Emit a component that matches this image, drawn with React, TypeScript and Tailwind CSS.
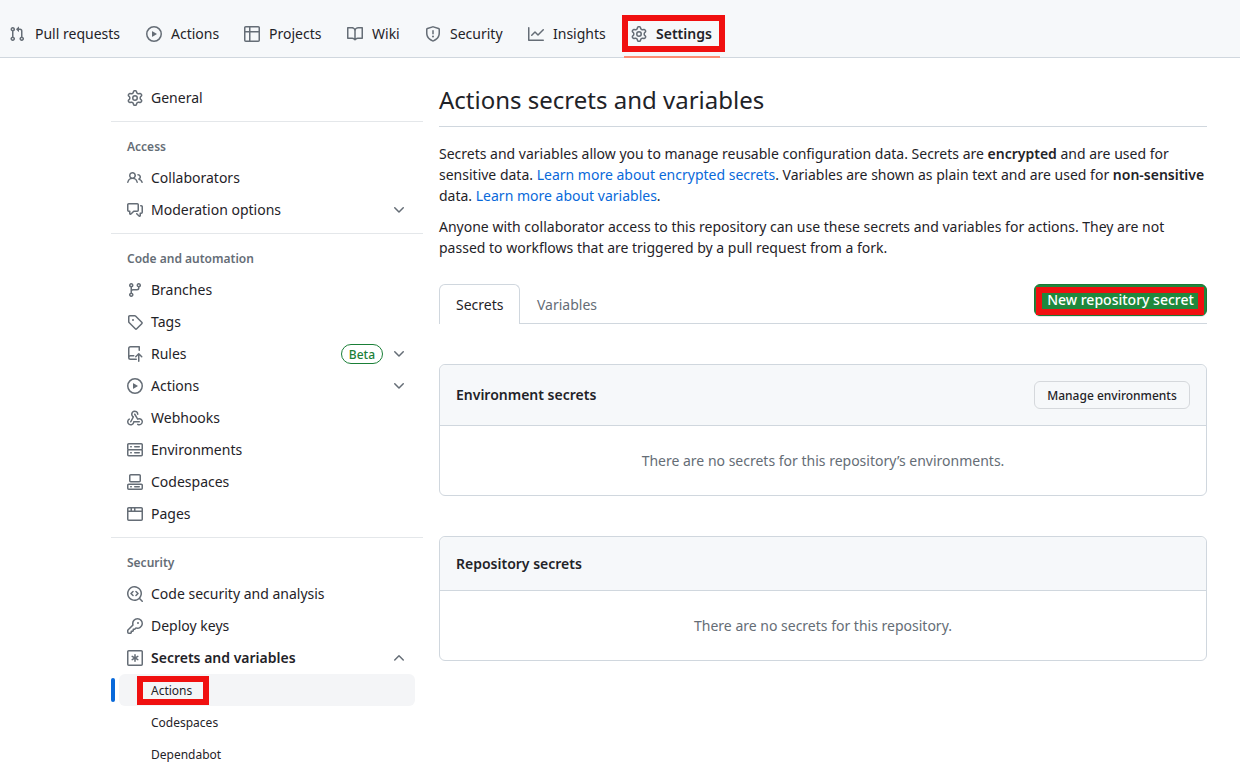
import type { ReactNode } from 'react';

const ICONS = {
  pull: 'M1.5 3.25a2.25 2.25 0 1 1 3 2.122v5.256a2.251 2.251 0 1 1-1.5 0V5.372A2.25 2.25 0 0 1 1.5 3.25Zm5.677-.177L9.573.677A.25.25 0 0 1 10 .854V2.5h1A2.5 2.5 0 0 1 13.5 5v5.628a2.251 2.251 0 1 1-1.5 0V5a1 1 0 0 0-1-1h-1v1.646a.25.25 0 0 1-.427.177L7.177 3.427a.25.25 0 0 1 0-.354ZM3.75 2.5a.75.75 0 1 0 0 1.5.75.75 0 0 0 0-1.5Zm0 9.5a.75.75 0 1 0 0 1.5.75.75 0 0 0 0-1.5Zm8.25.75a.75.75 0 1 0 1.5 0 .75.75 0 0 0-1.5 0Z',
  play: 'M8 0a8 8 0 1 1 0 16A8 8 0 0 1 8 0ZM1.5 8a6.5 6.5 0 1 0 13 0 6.5 6.5 0 0 0-13 0Zm4.879-2.773 4.264 2.559a.25.25 0 0 1 0 .428l-4.264 2.559A.25.25 0 0 1 6 10.559V5.442a.25.25 0 0 1 .379-.215Z',
  table: 'M0 1.75C0 .784.784 0 1.75 0h12.5C15.216 0 16 .784 16 1.75v12.5A1.75 1.75 0 0 1 14.25 16H1.75A1.75 1.75 0 0 1 0 14.25ZM6.5 6.5v8h7.75a.25.25 0 0 0 .25-.25V6.5Zm8-1.5V1.75a.25.25 0 0 0-.25-.25H6.5V5Zm-13 1.5v7.75c0 .138.112.25.25.25H5v-8ZM5 5V1.5H1.75a.25.25 0 0 0-.25.25V5Z',
  book: 'M0 1.75A.75.75 0 0 1 .75 1h4.253c1.227 0 2.317.59 3 1.501A3.743 3.743 0 0 1 11.006 1h4.245a.75.75 0 0 1 .75.75v10.5a.75.75 0 0 1-.75.75h-4.507a2.25 2.25 0 0 0-1.591.659l-.622.621a.75.75 0 0 1-1.06 0l-.622-.621A2.25 2.25 0 0 0 5.258 13H.75a.75.75 0 0 1-.75-.75Zm7.251 10.324.004-5.073-.002-2.253A2.25 2.25 0 0 0 5.003 2.5H1.5v9h3.757a3.75 3.75 0 0 1 1.994.574ZM8.755 4.75l-.004 7.322a3.752 3.752 0 0 1 1.992-.572H14.5v-9h-3.495a2.25 2.25 0 0 0-2.25 2.25Z',
  shield: 'M7.467.133a1.748 1.748 0 0 1 1.066 0l5.25 1.68A1.75 1.75 0 0 1 15 3.48V7c0 1.566-.32 3.182-1.303 4.682-.983 1.498-2.585 2.813-5.032 3.855a1.697 1.697 0 0 1-1.33 0c-2.447-1.042-4.049-2.357-5.032-3.855C1.32 10.182 1 8.566 1 7V3.48a1.75 1.75 0 0 1 1.217-1.667Zm.61 1.429a.25.25 0 0 0-.153 0l-5.25 1.68a.25.25 0 0 0-.174.238V7c0 1.358.275 2.666 1.057 3.86.784 1.194 2.121 2.34 4.366 3.297a.196.196 0 0 0 .154 0c2.245-.956 3.582-2.104 4.366-3.298C13.225 9.666 13.5 8.36 13.5 7V3.48a.251.251 0 0 0-.174-.237l-5.25-1.68ZM8.75 4.75v3a.75.75 0 0 1-1.5 0v-3a.75.75 0 0 1 1.5 0ZM9 10.5a1 1 0 1 1-2 0 1 1 0 0 1 2 0Z',
  graph: 'M1.5 1.75V13.5h13.75a.75.75 0 0 1 0 1.5H.75a.75.75 0 0 1-.75-.75V1.75a.75.75 0 0 1 1.5 0Zm14.28 2.53-5.25 5.25a.75.75 0 0 1-1.06 0L7 7.06 4.28 9.78a.751.751 0 0 1-1.042-.018.751.751 0 0 1-.018-1.042l3.25-3.25a.75.75 0 0 1 1.06 0L10 7.94l4.72-4.72a.751.751 0 0 1 1.042.018.751.751 0 0 1 .018 1.042Z',
  gear: 'M8 0a8.2 8.2 0 0 1 .701.031C9.444.095 9.99.645 10.16 1.29l.288 1.107c.018.066.079.158.212.224.231.114.454.243.668.386.123.082.233.09.299.071l1.103-.303c.644-.176 1.392.021 1.82.63.27.385.506.792.704 1.218.315.675.111 1.422-.364 1.891l-.814.806c-.049.048-.098.147-.088.294.016.257.016.515 0 .772-.01.147.038.246.088.294l.814.806c.475.469.679 1.216.364 1.891a7.977 7.977 0 0 1-.704 1.217c-.428.61-1.176.807-1.82.63l-1.102-.302c-.067-.019-.177-.011-.3.071a5.909 5.909 0 0 1-.668.386c-.133.066-.194.158-.211.224l-.29 1.106c-.168.646-.715 1.196-1.458 1.26a8.006 8.006 0 0 1-1.402 0c-.743-.064-1.289-.614-1.458-1.26l-.289-1.106c-.018-.066-.079-.158-.212-.224a5.738 5.738 0 0 1-.668-.386c-.123-.082-.233-.09-.299-.071l-1.103.303c-.644.176-1.392-.021-1.82-.63a8.12 8.12 0 0 1-.704-1.218c-.315-.675-.111-1.422.363-1.891l.815-.806c.05-.048.098-.147.088-.294a6.214 6.214 0 0 1 0-.772c.01-.147-.038-.246-.088-.294l-.815-.806C.635 6.045.431 5.298.746 4.623a7.92 7.92 0 0 1 .704-1.217c.428-.61 1.176-.807 1.82-.63l1.102.302c.067.019.177.011.3-.071.214-.143.437-.272.668-.386.133-.066.194-.158.211-.224l.29-1.106C6.009.645 6.556.095 7.299.03 7.53.01 7.764 0 8 0Zm-.571 1.525c-.036.003-.108.036-.137.146l-.289 1.105c-.147.561-.549.967-.998 1.189-.173.086-.34.183-.5.29-.417.278-.97.423-1.529.27l-1.103-.303c-.109-.03-.175.016-.195.045-.22.312-.412.644-.573.99-.014.031-.021.11.059.19l.815.806c.411.406.562.957.53 1.456a4.709 4.709 0 0 0 0 .582c.032.499-.119 1.05-.53 1.456l-.815.806c-.081.08-.073.159-.059.19.162.346.353.677.573.989.02.03.085.076.195.046l1.102-.303c.56-.153 1.113-.008 1.53.27.161.107.328.204.501.29.447.222.85.629.997 1.189l.289 1.105c.029.109.101.143.137.146a6.6 6.6 0 0 0 1.142 0c.036-.003.108-.036.137-.146l.289-1.105c.147-.561.549-.967.998-1.189.173-.086.34-.183.5-.29.417-.278.97-.423 1.529-.27l1.103.303c.109.029.175-.016.195-.045.22-.313.411-.644.573-.99.014-.031.021-.11-.059-.19l-.815-.806c-.411-.406-.562-.957-.53-1.456a4.709 4.709 0 0 0 0-.582c-.032-.499.119-1.05.53-1.456l.815-.806c.081-.08.073-.159.059-.19a6.464 6.464 0 0 0-.573-.989c-.02-.03-.085-.076-.195-.046l-1.102.303c-.56.153-1.113.008-1.53-.27a4.44 4.44 0 0 0-.501-.29c-.447-.222-.85-.629-.997-1.189l-.289-1.105c-.029-.11-.101-.143-.137-.146a6.6 6.6 0 0 0-1.142 0ZM11 8a3 3 0 1 1-6 0 3 3 0 0 1 6 0ZM9.5 8a1.5 1.5 0 1 0-3.001.001A1.5 1.5 0 0 0 9.5 8Z',
  people: 'M2 5.5a3.5 3.5 0 1 1 5.898 2.549 5.508 5.508 0 0 1 3.034 4.084.75.75 0 1 1-1.482.235 4 4 0 0 0-7.9 0 .75.75 0 0 1-1.482-.236A5.507 5.507 0 0 1 3.102 8.05 3.493 3.493 0 0 1 2 5.5ZM11 4a3.001 3.001 0 0 1 2.22 5.018 5.01 5.01 0 0 1 2.56 3.012.749.749 0 0 1-.885.954.752.752 0 0 1-.549-.514 3.507 3.507 0 0 0-2.522-2.372.75.75 0 0 1-.574-.73v-.352a.75.75 0 0 1 .416-.672A1.5 1.5 0 0 0 11 5.5.75.75 0 0 1 11 4Zm-5.5-.5a2 2 0 1 0-.001 3.999A2 2 0 0 0 5.5 3.5Z',
  discussion: 'M1.75 1h8.5c.966 0 1.75.784 1.75 1.75v5.5A1.75 1.75 0 0 1 10.25 10H7.061l-2.574 2.573A1.458 1.458 0 0 1 2 11.543V10h-.25A1.75 1.75 0 0 1 0 8.25v-5.5C0 1.784.784 1 1.75 1ZM1.5 2.75v5.5c0 .138.112.25.25.25h1a.75.75 0 0 1 .75.75v2.19l2.72-2.72a.749.749 0 0 1 .53-.22h3.5a.25.25 0 0 0 .25-.25v-5.5a.25.25 0 0 0-.25-.25h-8.5a.25.25 0 0 0-.25.25Zm13 2a.25.25 0 0 0-.25-.25h-.5a.75.75 0 0 1 0-1.5h.5c.966 0 1.75.784 1.75 1.75v5.5A1.75 1.75 0 0 1 14.25 12H14v1.543a1.458 1.458 0 0 1-2.487 1.03L9.22 12.28a.749.749 0 0 1 .326-1.275.749.749 0 0 1 .734.215l2.22 2.22v-2.19a.75.75 0 0 1 .75-.75h1a.25.25 0 0 0 .25-.25Z',
  branch: 'M9.5 3.25a2.25 2.25 0 1 1 3 2.122V6A2.5 2.5 0 0 1 10 8.5H6a1 1 0 0 0-1 1v1.128a2.251 2.251 0 1 1-1.5 0V5.372a2.25 2.25 0 1 1 1.5 0v1.836A2.493 2.493 0 0 1 6 7h4a1 1 0 0 0 1-1v-.628A2.25 2.25 0 0 1 9.5 3.25Zm-6 0a.75.75 0 1 0 1.5 0 .75.75 0 0 0-1.5 0Zm8.25-.75a.75.75 0 1 0 0 1.5.75.75 0 0 0 0-1.5ZM4.25 12a.75.75 0 1 0 0 1.5.75.75 0 0 0 0-1.5Z',
  tag: 'M1 7.775V2.75C1 1.784 1.784 1 2.75 1h5.025c.464 0 .91.184 1.238.513l6.25 6.25a1.75 1.75 0 0 1 0 2.474l-5.026 5.026a1.75 1.75 0 0 1-2.474 0l-6.25-6.25A1.752 1.752 0 0 1 1 7.775Zm1.5 0c0 .066.026.13.073.177l6.25 6.25a.25.25 0 0 0 .354 0l5.025-5.025a.25.25 0 0 0 0-.354l-6.25-6.25a.25.25 0 0 0-.177-.073H2.75a.25.25 0 0 0-.25.25ZM6 5a1 1 0 1 1 0 2 1 1 0 0 1 0-2Z',
  push: 'M1 2.5A2.5 2.5 0 0 1 3.5 0h8.75a.75.75 0 0 1 .75.75v3.5a.75.75 0 0 1-1.5 0V1.5h-8a1 1 0 0 0-1 1v6.708A2.493 2.493 0 0 1 3.5 9h3.25a.75.75 0 0 1 0 1.5H3.5a1 1 0 0 0 0 2h5.75a.75.75 0 0 1 0 1.5H3.5A2.5 2.5 0 0 1 1 11.5ZM12.28 7.22l3 3a.75.75 0 0 1-1.06 1.06L12.5 9.56v5.69a.75.75 0 0 1-1.5 0V9.56l-1.72 1.72a.75.75 0 0 1-1.06-1.06l3-3a.75.75 0 0 1 1.06 0Z',
  webhook: 'M5.5 4.25a2.25 2.25 0 0 1 4.5 0 .75.75 0 0 0 1.5 0 3.75 3.75 0 1 0-6.14 2.889l-2.272 4.258a.75.75 0 0 0 1.324.706L7 7.25a.75.75 0 0 0-.309-1.015A2.25 2.25 0 0 1 5.5 4.25ZM7.364 3.607a.75.75 0 0 1 1.03.257l2.608 4.349a3.75 3.75 0 1 1-.628 6.785.75.75 0 0 1 .752-1.299 2.25 2.25 0 1 0-.033-3.88.75.75 0 0 1-1.03-.256L7.107 4.636a.75.75 0 0 1 .257-1.03ZM2.9 8.776A.75.75 0 0 1 2.625 9.8 2.25 2.25 0 1 0 6 11.75a.75.75 0 0 1 .75-.751h5.5a.75.75 0 0 1 0 1.5H7.425a3.751 3.751 0 1 1-5.55-3.998.75.75 0 0 1 1.024.274Z',
  server: 'M1.75 1h12.5c.966 0 1.75.784 1.75 1.75v4c0 .372-.116.717-.314 1 .198.283.314.628.314 1v4a1.75 1.75 0 0 1-1.75 1.75H1.75A1.75 1.75 0 0 1 0 12.75v-4c0-.358.109-.707.314-1a1.739 1.739 0 0 1-.314-1v-4C0 1.784.784 1 1.75 1ZM1.5 2.75v4c0 .138.112.25.25.25h12.5a.25.25 0 0 0 .25-.25v-4a.25.25 0 0 0-.25-.25H1.75a.25.25 0 0 0-.25.25Zm.25 5.75a.25.25 0 0 0-.25.25v4c0 .138.112.25.25.25h12.5a.25.25 0 0 0 .25-.25v-4a.25.25 0 0 0-.25-.25ZM7 4.75A.75.75 0 0 1 7.75 4h4.5a.75.75 0 0 1 0 1.5h-4.5A.75.75 0 0 1 7 4.75ZM7.75 10h4.5a.75.75 0 0 1 0 1.5h-4.5a.75.75 0 0 1 0-1.5ZM3 4.75A.75.75 0 0 1 3.75 4h.5a.75.75 0 0 1 0 1.5h-.5A.75.75 0 0 1 3 4.75ZM3.75 10h.5a.75.75 0 0 1 0 1.5h-.5a.75.75 0 0 1 0-1.5Z',
  codespaces: 'M0 11.25c0-.966.784-1.75 1.75-1.75h12.5c.966 0 1.75.784 1.75 1.75v3A1.75 1.75 0 0 1 14.25 16H1.75A1.75 1.75 0 0 1 0 14.25Zm2-9.5C2 .784 2.784 0 3.75 0h8.5C13.216 0 14 .784 14 1.75v5a1.75 1.75 0 0 1-1.75 1.75h-8.5A1.75 1.75 0 0 1 2 6.75Zm1.75-.25a.25.25 0 0 0-.25.25v5c0 .138.112.25.25.25h8.5a.25.25 0 0 0 .25-.25v-5a.25.25 0 0 0-.25-.25Zm-2 9.5a.25.25 0 0 0-.25.25v3c0 .138.112.25.25.25h12.5a.25.25 0 0 0 .25-.25v-3a.25.25 0 0 0-.25-.25ZM7 12.75a.75.75 0 0 1 .75-.75h4.5a.75.75 0 0 1 0 1.5h-4.5a.75.75 0 0 1-.75-.75Zm-4 0a.75.75 0 0 1 .75-.75h.5a.75.75 0 0 1 0 1.5h-.5a.75.75 0 0 1-.75-.75Z',
  browser: 'M0 2.75C0 1.784.784 1 1.75 1h12.5c.966 0 1.75.784 1.75 1.75v10.5A1.75 1.75 0 0 1 14.25 15H1.75A1.75 1.75 0 0 1 0 13.25ZM14.5 6h-13v7.25c0 .138.112.25.25.25h12.5a.25.25 0 0 0 .25-.25Zm-6-3.5v2h6V2.75a.25.25 0 0 0-.25-.25ZM5 2.5v2h2v-2Zm-3.25 0a.25.25 0 0 0-.25.25V4.5h2v-2Z',
  codescan: 'M8.47 4.97a.75.75 0 0 0 0 1.06L9.94 7.5 8.47 8.97a.75.75 0 1 0 1.06 1.06l2-2a.75.75 0 0 0 0-1.06l-2-2a.75.75 0 0 0-1.06 0ZM6.53 6.03a.75.75 0 0 0-1.06-1.06l-2 2a.75.75 0 0 0 0 1.06l2 2a.75.75 0 1 0 1.06-1.06L5.06 7.5l1.47-1.47ZM12.246 13.307a7.501 7.501 0 1 1 1.06-1.06l2.474 2.473a.749.749 0 0 1-.326 1.275.749.749 0 0 1-.734-.215ZM1.5 7.5a6.002 6.002 0 0 0 3.608 5.504 6.002 6.002 0 0 0 6.486-1.117.748.748 0 0 1 .292-.293A6 6 0 1 0 1.5 7.5Z',
  key: 'M10.5 0a5.499 5.499 0 1 1-1.288 10.848l-.932.932a.749.749 0 0 1-.53.22H7v.75a.749.749 0 0 1-.22.53l-.5.5a.749.749 0 0 1-.53.22H5v.75a.749.749 0 0 1-.22.53l-.5.5a.749.749 0 0 1-.53.22h-2A1.75 1.75 0 0 1 0 14.25v-2c0-.199.079-.389.22-.53l4.932-4.932A5.5 5.5 0 0 1 10.5 0Zm-4 5.5c-.001.431.069.86.205 1.269a.75.75 0 0 1-.181.768L1.5 12.56v1.69c0 .138.112.25.25.25h1.69l.06-.06v-1.19a.75.75 0 0 1 .75-.75h1.19l.06-.06v-1.19a.75.75 0 0 1 .75-.75h1.19l1.023-1.025a.75.75 0 0 1 .768-.18A4 4 0 1 0 6.5 5.5ZM11 6a1 1 0 1 1 0-2 1 1 0 0 1 0 2Z',
  asterisk: 'M0 1.75C0 .784.784 0 1.75 0h12.5C15.216 0 16 .784 16 1.75v12.5A1.75 1.75 0 0 1 14.25 16H1.75A1.75 1.75 0 0 1 0 14.25ZM1.75 1.5a.25.25 0 0 0-.25.25v12.5c0 .138.112.25.25.25h12.5a.25.25 0 0 0 .25-.25V1.75a.25.25 0 0 0-.25-.25ZM8 4a.75.75 0 0 1 .75.75V6.7l1.69-.975a.75.75 0 0 1 .75 1.3L9.5 8l1.69.976a.75.75 0 0 1-.75 1.298L8.75 9.3v1.951a.75.75 0 0 1-1.5 0V9.299l-1.69.976a.75.75 0 0 1-.75-1.3L6.5 8l-1.69-.975a.75.75 0 0 1 .75-1.3l1.69.976V4.75A.75.75 0 0 1 8 4Z',
  down: 'M12.78 5.22a.749.749 0 0 1 0 1.06l-4.25 4.25a.749.749 0 0 1-1.06 0L3.22 6.28a.749.749 0 1 1 1.06-1.06L8 8.939l3.72-3.719a.749.749 0 0 1 1.06 0Z',
  up: 'M3.22 10.53a.749.749 0 0 1 0-1.06l4.25-4.25a.749.749 0 0 1 1.06 0l4.25 4.25a.749.749 0 1 1-1.06 1.06L8 6.811 4.28 10.53a.749.749 0 0 1-1.06 0Z',
};

type IconName = keyof typeof ICONS;

function Icon({ name }: { name: IconName }) {
  return (
    <svg viewBox="0 0 16 16" className="h-4 w-4 shrink-0 fill-[#656d76]" aria-hidden="true">
      <path d={ICONS[name]} />
    </svg>
  );
}

function Highlight({ className }: { className: string }) {
  return <span className={`pointer-events-none absolute border-6 border-[#f01010] ${className}`} />;
}

const TABS: { icon: IconName; label: string; width: string; gap: string }[] = [
  { icon: 'pull', label: 'Pull requests', width: 'w-[137px]', gap: 'gap-[10px]' },
  { icon: 'play', label: 'Actions', width: 'w-[98px]', gap: 'gap-[9px]' },
  { icon: 'table', label: 'Projects', width: 'w-[103px]', gap: 'gap-[9px]' },
  { icon: 'book', label: 'Wiki', width: 'w-[78px]', gap: 'gap-[9px]' },
  { icon: 'shield', label: 'Security', width: 'w-[103px]', gap: 'gap-[9px]' },
  { icon: 'graph', label: 'Insights', width: 'w-[103px]', gap: 'gap-[9px]' },
];

function TopNav() {
  return (
    <header className="flex h-[58px] shrink-0 border-b border-[#d0d7de] bg-[#f6f8fa] pt-5 pl-[9px]">
      {TABS.map((t) => (
        <a key={t.label} className={`flex h-7 shrink-0 items-center ${t.gap} ${t.width}`}>
          <Icon name={t.icon} />
          <span className="whitespace-nowrap">{t.label}</span>
        </a>
      ))}
      <a className="relative flex h-[38px] w-24 items-start">
        <span className="flex h-7 items-center gap-[9px]">
          <Icon name="gear" />
          <span className="font-semibold">Settings</span>
        </span>
        <span className="absolute -left-[7px] bottom-0 h-[2px] w-24 bg-[#fd8c73]" />
        <Highlight className="-top-[5px] -left-[9px] h-[37px] w-[103px]" />
      </a>
    </header>
  );
}

function NavRow({ icon, label, bold, badge, chevron }: { icon: IconName; label: string; bold?: boolean; badge?: string; chevron?: IconName }) {
  return (
    <a className="flex h-8 items-center gap-2 pr-2 pl-4">
      <Icon name={icon} />
      <span className={bold ? 'grow font-semibold' : 'grow'}>{label}</span>
      {badge && (
        <span className="flex h-5 items-center rounded-full border border-[#1a7f37] px-[7px] pt-0.5 text-xs font-medium text-[#1a7f37]">{badge}</span>
      )}
      {chevron && <Icon name={chevron} />}
    </a>
  );
}

function Group({ title, children }: { title: string; children: ReactNode }) {
  return (
    <section className="mt-[7px] w-[312px] border-t border-[#e4e7ea] pt-2">
      <h3 className="flex h-8 items-center pt-0.5 pl-4 text-xs font-semibold text-[#656d76]">{title}</h3>
      <div className="w-[304px]">{children}</div>
    </section>
  );
}

function Sidebar() {
  return (
    <nav className="w-[312px] shrink-0 pt-6">
      <NavRow icon="gear" label="General" />
      <Group title="Access">
        <NavRow icon="people" label="Collaborators" />
        <NavRow icon="discussion" label="Moderation options" chevron="down" />
      </Group>
      <Group title="Code and automation">
        <NavRow icon="branch" label="Branches" />
        <NavRow icon="tag" label="Tags" />
        <NavRow icon="push" label="Rules" badge="Beta" chevron="down" />
        <NavRow icon="play" label="Actions" chevron="down" />
        <NavRow icon="webhook" label="Webhooks" />
        <NavRow icon="server" label="Environments" />
        <NavRow icon="codespaces" label="Codespaces" />
        <NavRow icon="browser" label="Pages" />
      </Group>
      <Group title="Security">
        <NavRow icon="codescan" label="Code security and analysis" />
        <NavRow icon="key" label="Deploy keys" />
        <NavRow icon="asterisk" label="Secrets and variables" bold chevron="up" />
        <div className="flex items-center gap-1 text-xs">
          <span className="h-6 w-1 rounded-md bg-[#0969da]" />
          <a className="relative flex h-8 grow items-center rounded-md bg-[#f4f5f7] pt-0.5 pl-8">
            Actions
            <Highlight className="top-[2px] left-[18px] h-[29px] w-[72px]" />
          </a>
        </div>
        <a className="flex h-8 items-center pt-0.5 pl-10 text-xs">Codespaces</a>
        <a className="flex h-8 items-center pt-0.5 pl-10 text-xs">Dependabot</a>
      </Group>
    </nav>
  );
}

function Main() {
  return (
    <main className="w-[768px] shrink-0 pt-6">
      <h1 className="h-[45px] border-b border-[#d0d7de] text-2xl leading-9">Actions secrets and variables</h1>
      <p className="mt-4 leading-[21px]">
        Secrets and variables allow you to manage reusable configuration data. Secrets are <b className="font-semibold">encrypted</b> and are used for
        sensitive data. <a className="text-[#0969da]">Learn more about encrypted secrets</a>. Variables are shown as plain text and are used for{' '}
        <b className="font-semibold">non-sensitive</b> data. <a className="text-[#0969da]">Learn more about variables</a>.
      </p>
      <p className="mt-[10px] leading-[21px]">
        Anyone with collaborator access to this repository can use these secrets and variables for actions. They are not passed to workflows that are
        triggered by a pull request from a fork.
      </p>
      <div className="mt-[26px] flex h-10 items-start border-b border-[#d0d7de]">
        <a className="flex h-10 w-[81px] items-center rounded-t-md border border-b-0 border-[#d0d7de] bg-white pl-4">Secrets</a>
        <a className="flex h-10 items-center pt-px pl-[17px] text-[#656d76]">Variables</a>
        <button className="relative ml-auto flex h-8 w-[173px] items-center justify-center rounded-md border border-[#1c7735] bg-[#1f883d] font-medium text-white shadow-[0_1px_0_rgba(31,35,40,0.1)]">
          <Highlight className="top-[2px] left-px h-7 w-[168px]" />
          <span className="relative">New repository secret</span>
        </button>
      </div>
      <section className="mt-10 rounded-md border border-[#d0d7de]">
        <div className="flex h-[61px] items-center justify-between rounded-t-md border-b border-[#d0d7de] bg-[#f6f8fa] px-4">
          <h3 className="font-semibold">Environment secrets</h3>
          <button className="h-7 w-[156px] rounded-md border border-[#d5d8dc] bg-[#f6f8fa] pt-0.5 text-xs font-medium whitespace-nowrap">Manage environments</button>
        </div>
        <p className="flex h-[69px] items-center justify-center text-[#656d76]">There are no secrets for this repository’s environments.</p>
      </section>
      <section className="mt-10 rounded-md border border-[#d0d7de]">
        <div className="flex h-[54px] items-center rounded-t-md border-b border-[#d0d7de] bg-[#f6f8fa] px-4">
          <h3 className="font-semibold">Repository secrets</h3>
        </div>
        <p className="flex h-[69px] items-center justify-center text-[#656d76]">There are no secrets for this repository.</p>
      </section>
    </main>
  );
}

export default function App() {
  return (
    <div className="flex h-[772px] w-[1240px] flex-col overflow-hidden bg-white font-['Noto_Sans',sans-serif] text-sm text-[#1f2328]">
      <TopNav />
      <div className="flex gap-4 pl-[111px]">
        <Sidebar />
        <Main />
      </div>
    </div>
  );
}
